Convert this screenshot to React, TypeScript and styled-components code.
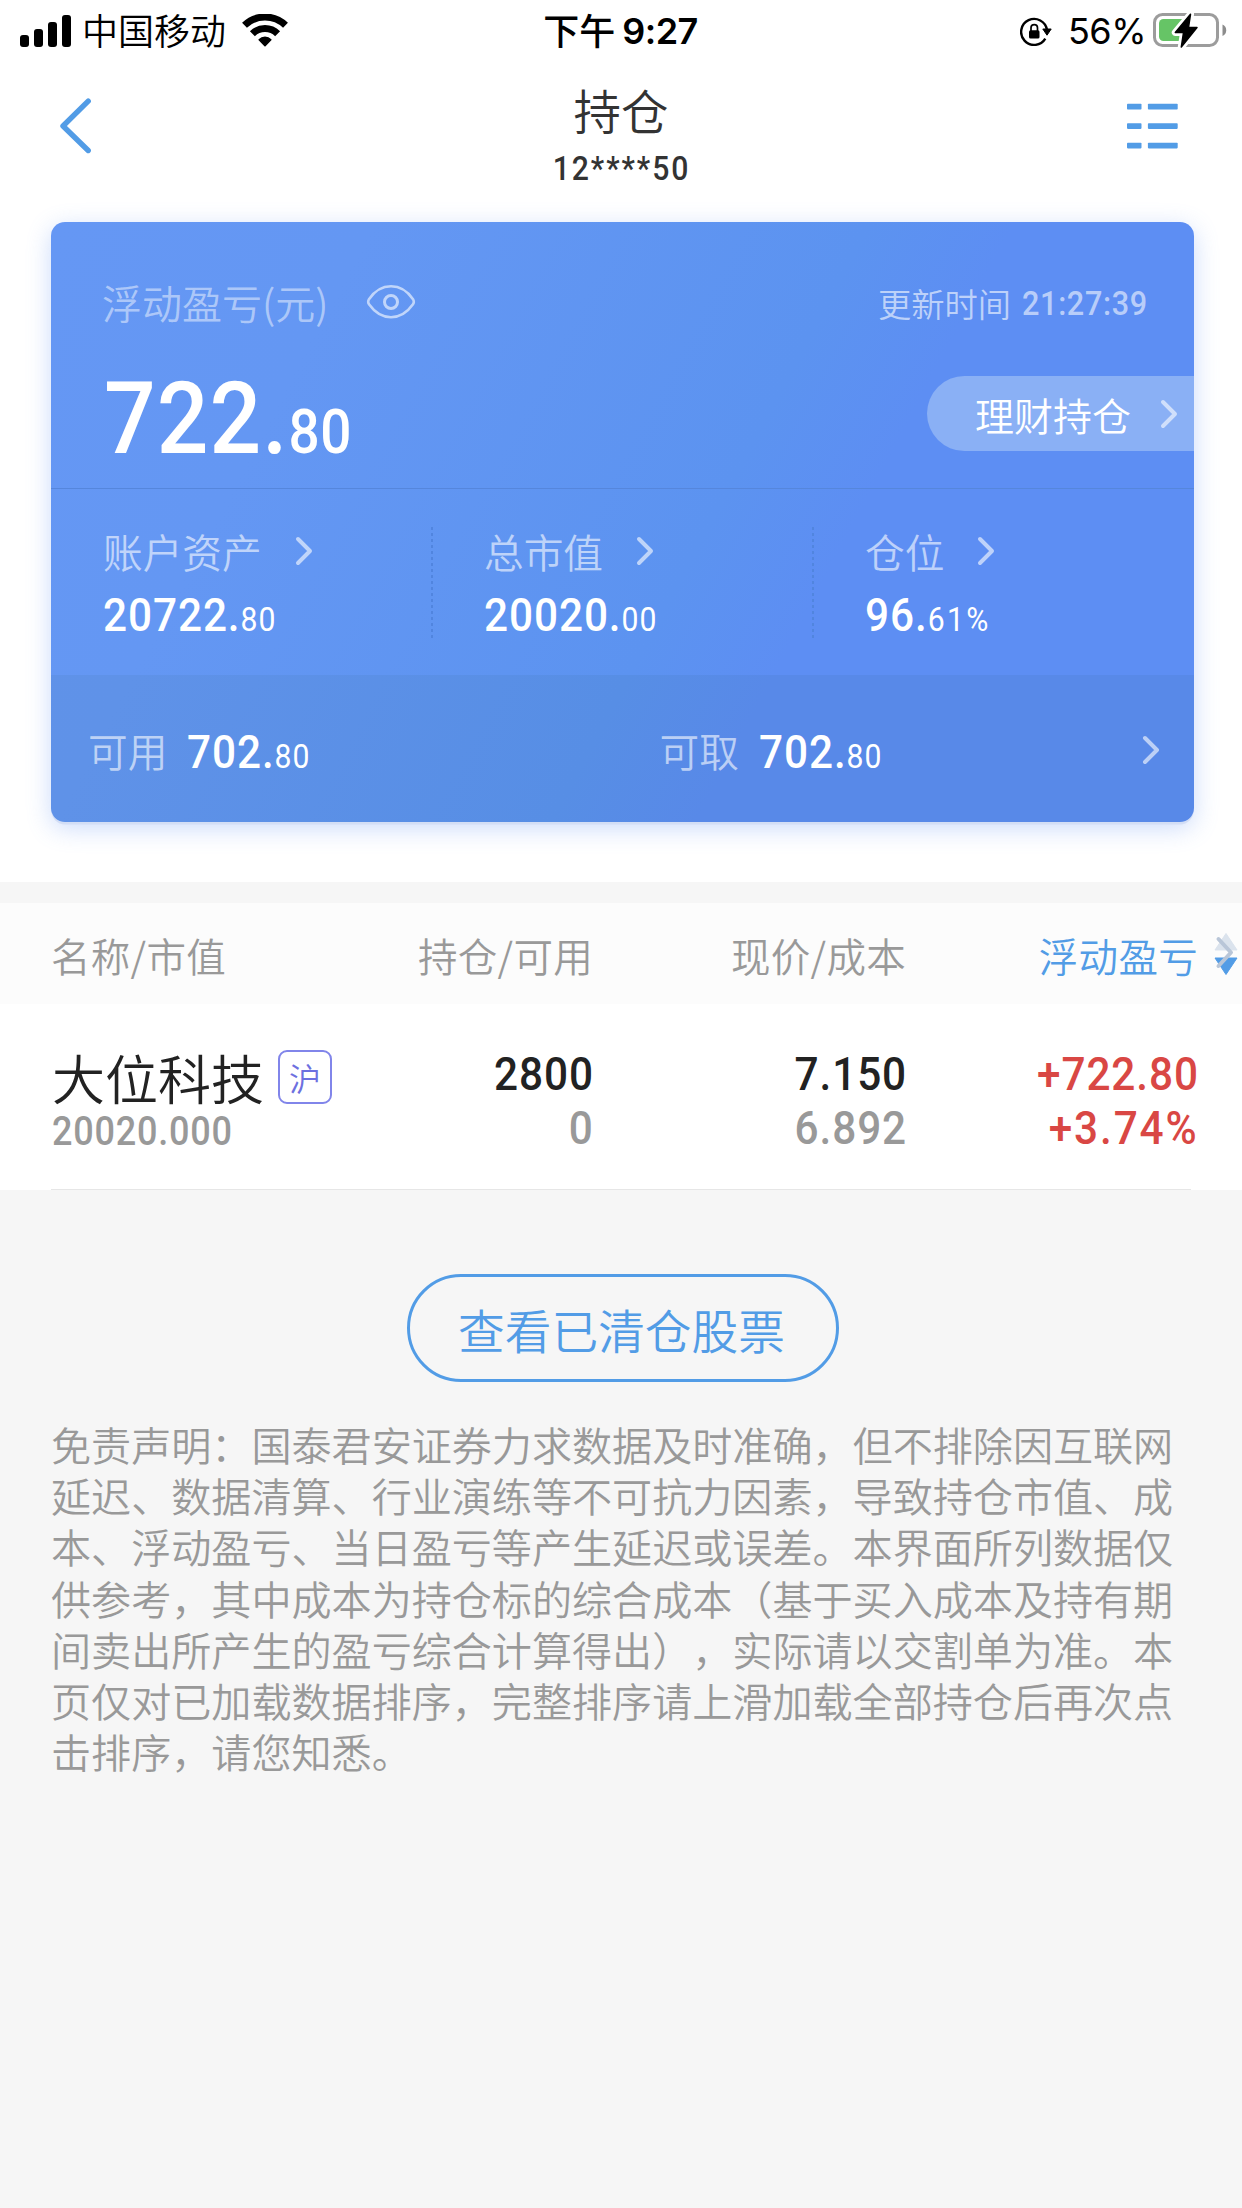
import React from 'react';
import styled, { createGlobalStyle } from 'styled-components';

const blue = '#529ce6';
const cjk = `'Noto Sans CJK SC', sans-serif`;

const GlobalStyle = createGlobalStyle`
  * { box-sizing: border-box; }
  html, body { margin: 0; padding: 0; background: #f6f6f6; }
  body {
    font-family: 'Noto Sans CJK SC DemiLight', ${cjk};
    font-weight: 350;
    text-spacing-trim: space-all;
    overflow: hidden;
  }
`;

const Screen = styled.div`
  width: 1242px;
  height: 2208px;
  overflow: hidden;
  display: flex;
  flex-direction: column;
  background: #f6f6f6;
`;

const Top = styled.div`
  background: #fff;
  height: 882px;
  flex: none;
`;

/* ---------- status bar ---------- */

const StatusBar = styled.div`
  height: 62px;
  display: grid;
  grid-template-columns: 1fr auto 1fr;
  align-items: center;
  padding: 0 15px 0 20px;
  color: #000;
`;

const StatusGroup = styled.div<{ $end?: boolean; $gap?: number }>`
  display: flex;
  align-items: center;
  gap: ${(p) => p.$gap ?? 0}px;
  justify-content: ${(p) => (p.$end ? 'flex-end' : 'flex-start')};
`;

const Clock = styled(StatusGroup)`
  padding-right: 6px;
`;

const Carrier = styled.span`
  font-size: 36px;
  line-height: 40px;
  padding: 0 4px 4px 0;
  margin-left: -2px;
  white-space: nowrap;
`;

const DayPart = styled.span`
  font-family: ${cjk};
  font-weight: 500;
  font-size: 36px;
  line-height: 40px;
  padding-bottom: 4px;
`;

const StatusDigits = styled.span<{ $weight?: number; $spacing?: number }>`
  font-family: Inter, sans-serif;
  font-size: 36px;
  line-height: 40px;
  font-weight: ${(p) => p.$weight ?? 400};
  letter-spacing: ${(p) => p.$spacing ?? 0}px;
`;

/* ---------- navigation ---------- */

const NavBar = styled.div`
  height: 160px;
  display: grid;
  grid-template-columns: 1fr auto 1fr;
  align-items: center;
  padding: 0 63px 32px 60px;
  color: #333;
`;

const NavSide = styled.div<{ $end?: boolean }>`
  display: flex;
  justify-content: ${(p) => (p.$end ? 'flex-end' : 'flex-start')};
`;

const NavTitle = styled.div`
  align-self: start;
  display: flex;
  flex-direction: column;
  align-items: center;
  padding: 18px 0 0 3px;
`;

const Title = styled.h1`
  margin: 0 0 12px;
  font-size: 47.5px;
  line-height: 60px;
  font-weight: inherit;
`;

/* Narrow DIN-like figures: Roboto condensed horizontally */
const Num = styled.span<{
  $size: number;
  $color?: string;
  $weight?: number;
  $origin?: string;
  $spacing?: number;
}>`
  display: inline-block;
  font-family: Roboto, sans-serif;
  font-weight: ${(p) => p.$weight ?? 500};
  font-size: ${(p) => p.$size}px;
  line-height: 1;
  letter-spacing: ${(p) => p.$spacing ?? 0.022}em;
  color: ${(p) => p.$color ?? 'inherit'};
  transform: scaleX(0.9);
  transform-origin: ${(p) => p.$origin ?? 'left'} center;
  white-space: nowrap;
`;

const Cents = styled.span<{ $size: number; $weight?: number; $spacing?: number }>`
  font-size: ${(p) => p.$size}px;
  font-weight: ${(p) => p.$weight ?? 400};
  letter-spacing: ${(p) => p.$spacing ?? 0.03}em;
  line-height: 0;
`;

/* ---------- summary card ---------- */

const Card = styled.section`
  margin: 0 48px 0 51px;
  height: 600px;
  border-radius: 14px;
  overflow: hidden;
  display: flex;
  flex-direction: column;
  color: #fff;
  background: linear-gradient(118deg, #6597f4 0%, #6497f3 22%, #5c93f0 56%, #5d8ef3 66%, #5d8ef3 100%);
  box-shadow: 0 3px 0 -0.5px #d3def5, 0 6px 24px rgba(93, 142, 243, 0.32);
`;

const Headline = styled.div`
  height: 267px;
  border-bottom: 1px solid #5586dc;
  display: flex;
  justify-content: space-between;
`;

const HeadColumn = styled.div<{ $end?: boolean }>`
  display: flex;
  flex-direction: column;
  align-items: ${(p) => (p.$end ? 'flex-end' : 'flex-start')};
  padding: ${(p) => (p.$end ? '54px 0 0' : '53px 0 0 51px')};
`;

const LabelLine = styled.div`
  display: flex;
  align-items: center;
`;

const Label = styled.span<{ $size?: number; $alpha?: number }>`
  font-size: ${(p) => p.$size ?? 39.7}px;
  line-height: 54px;
  color: rgba(255, 255, 255, ${(p) => p.$alpha ?? 0.6});
  white-space: nowrap;
`;

const EyeSlot = styled.span`
  display: flex;
  margin-left: 38px;
`;

const MainFigure = styled.div`
  margin-top: 39px;
  padding-left: 2px;
  line-height: 1;
  display: flex;
`;

const UpdateLine = styled.div`
  display: flex;
  align-items: center;
  gap: 11px;
  padding-right: 32px;
`;

const Pill = styled.div`
  margin-top: 46px;
  width: 267px;
  height: 75px;
  border-radius: 38px 0 0 38px;
  background: #8ab0f5;
  display: flex;
  align-items: center;
  justify-content: space-between;
  padding: 0 16px 0 48px;
`;

const PillText = styled.span`
  font-size: 39px;
  line-height: 54px;
  color: #fff;
`;

const Stats = styled.div`
  height: 186px;
  display: grid;
  grid-template-columns: repeat(3, 1fr);
`;

const Stat = styled.div`
  padding: 35px 0 0 52px;
  display: flex;
  flex-direction: column;
  align-items: flex-start;
  position: relative;

  & + &::before {
    content: '';
    position: absolute;
    left: -1px;
    top: 38px;
    width: 2px;
    height: 112px;
    background: repeating-linear-gradient(#5185df 0 3px, transparent 3px 6px);
  }
`;

const StatHead = styled.div`
  display: flex;
  align-items: center;
  gap: 33px;
  margin-bottom: 13px;
`;

const Funds = styled.div`
  flex: 1;
  display: grid;
  grid-template-columns: 1fr 1fr;
  background: rgba(20, 60, 60, 0.06);
`;

const Fund = styled.div`
  display: flex;
  align-items: center;
  padding: 2px 34px 0 37px;
  gap: 20px;
`;

const FundValue = styled.span`
  display: flex;
  padding-top: 3px;
`;

const Push = styled.span`
  margin-left: auto;
  display: flex;
`;

/* ---------- holdings table ---------- */

const gridCols = '51px 254px 288px 313px 292px 44px';

const TableHead = styled.div`
  margin-top: 21px;
  height: 101px;
  flex: none;
  background: #fcfcfc;
  display: grid;
  grid-template-columns: ${gridCols};
  align-items: center;
  font-size: 39.5px;
  letter-spacing: 0.3px;
  line-height: 54px;
  color: #999;
`;

const HeadCell = styled.span<{ $active?: boolean; $first?: boolean }>`
  text-align: ${(p) => (p.$first ? 'left' : 'right')};
  white-space: nowrap;
  grid-column: ${(p) => (p.$first ? '2' : 'auto')};
  color: ${(p) => (p.$active ? blue : 'inherit')};
  padding-top: 2px;
`;

const SortMark = styled.span`
  display: flex;
  justify-content: flex-end;
  padding: 0 3px 0 0;
`;

const Row = styled.div`
  height: 186px;
  flex: none;
  background: #fff;
  display: grid;
  grid-template-columns: ${gridCols};
  position: relative;

  &::after {
    content: '';
    position: absolute;
    left: 51px;
    right: 51px;
    bottom: 0;
    height: 1px;
    background: #e6e6e6;
  }
`;

const NameCell = styled.div`
  grid-column: 2;
  padding: 41px 0 0 1px;
`;

const NameLine = styled.div`
  display: flex;
  align-items: center;
  height: 64px;
  margin-bottom: 3px;
`;

const StockName = styled.span`
  font-size: 53px;
  line-height: 60px;
  color: #222;
  white-space: nowrap;
  padding-bottom: 1px;
`;

const Tag = styled.span`
  flex: none;
  width: 54px;
  height: 54px;
  margin-left: 14px;
  border: 2px solid #8185ea;
  border-radius: 9px;
  display: flex;
  justify-content: center;
  font-size: 32px;
  line-height: 50px;
  color: #6d70e0;
`;

const ValueCell = styled.div`
  display: flex;
  flex-direction: column;
  align-items: flex-end;
  padding-top: 46px;
  margin-right: -1px;
  gap: 7px;
`;

/* ---------- footer ---------- */

const ClearedButton = styled.button`
  flex: none;
  align-self: center;
  margin: 84px 0 0 4px;
  width: 432px;
  height: 108px;
  padding: 1px 3px 0 0;
  border: 3px solid ${blue};
  border-radius: 54px;
  background: transparent;
  color: ${blue};
  font-family: inherit;
  font-weight: inherit;
  font-size: 46.7px;
  line-height: 60px;
  white-space: nowrap;
`;

const Disclaimer = styled.p`
  margin: 36px 0 0 51px;
  font-size: 40.1px;
  line-height: 51.2px;
  color: #999;
  white-space: pre;
`;

/* ---------- icons ---------- */

const Chevron = ({ color = 'rgba(255,255,255,0.6)' }: { color?: string }) => (
  <svg width="18" height="30" viewBox="0 0 18 30" fill="none" stroke={color} strokeWidth="4" strokeLinecap="round" strokeLinejoin="round">
    <path d="M3 3L15 15L3 27" />
  </svg>
);

const SignalIcon = () => (
  <svg width="52" height="34" viewBox="0 0 52 34">
    <rect x="0" y="21" width="9" height="12" rx="3" />
    <rect x="14" y="15" width="9" height="18" rx="3" />
    <rect x="28" y="8" width="9" height="25" rx="3" />
    <rect x="42" y="1" width="9" height="32" rx="3" />
  </svg>
);

const WifiIcon = () => (
  <svg width="46" height="34" viewBox="0 0 46 34" fill="none" stroke="#000" strokeWidth="7">
    <path d="M2.500 11.300A29.500 29.500 0 0 1 43.500 11.300" />
    <path d="M10.400 19.700A17.800 17.800 0 0 1 35.600 19.700" />
    <path d="M23 31.700L17.200 25.700A8.200 8.200 0 0 1 28.800 25.700Z" fill="#000" strokeWidth="1.600" strokeLinejoin="round" />
  </svg>
);

const LockIcon = () => (
  <svg width="32" height="30" viewBox="0 0 32 30" fill="none" stroke="#000">
    <path d="M25.300 22.600A13 13 0 1 1 27 14" strokeWidth="2.400" />
    <path d="M22.800 13h8.400l-4.200 6.200z" fill="#000" strokeWidth="1" strokeLinejoin="round" />
    <rect x="9" y="14.200" width="10.500" height="8.300" rx="1.600" fill="#000" stroke="none" />
    <path d="M11 15v-3.200a3.250 3.250 0 0 1 6.500 0V15" strokeWidth="1.700" />
  </svg>
);

const BatteryIcon = () => (
  <svg width="74" height="36" viewBox="0 0 74 36">
    <rect x="1.500" y="1.500" width="63" height="31" rx="8" fill="none" stroke="#9c9c9c" strokeWidth="3" />
    <path d="M69.500 11.500c2.500 1 3.700 3 3.700 5.700s-1.200 4.700-3.700 5.700z" fill="#8c8c8c" />
    <rect x="6" y="6" width="29" height="22" rx="4.500" fill="#66c466" />
    <path d="M37.500 1.300L22.300 19.500H30.500L28.300 34L44 14.500H35.500Z" fill="#fff" stroke="#fff" strokeWidth="7" strokeLinejoin="round" />
    <path d="M37.500 1.300L22.300 19.500H30.500L28.300 34L44 14.500H35.500Z" fill="#000" stroke="#000" strokeWidth="1.500" strokeLinejoin="round" />
  </svg>
);

const BackIcon = () => (
  <svg width="32" height="56" viewBox="0 0 32 56" fill="none" stroke={blue} strokeWidth="5.400" strokeLinecap="round" strokeLinejoin="round">
    <path d="M28.200 3.200L3 28L28.200 52.500" />
  </svg>
);

const MenuIcon = () => (
  <svg width="52" height="46" viewBox="0 0 52 46" fill={blue}>
    {[0.8, 20.2, 39.7].map((y) => (
      <React.Fragment key={y}>
        <rect x="0" y={y} width="14.500" height="5.700" rx="0.800" />
        <rect x="20.900" y={y} width="29.800" height="5.700" rx="0.800" />
      </React.Fragment>
    ))}
  </svg>
);

const EyeIcon = () => (
  <svg width="50" height="36" viewBox="0 0 50 36" fill="none" stroke="rgba(255,255,255,0.6)" strokeWidth="2.600">
    <path d="M3 15.200C9 6.500 16.500 2.300 25 2.300S41 6.500 47 15.200Q48.600 18 47 20.300C41 28.800 33.500 33.200 25 33.200S9 28.800 3 20.300Q1.400 18 3 15.200Z" />
    <circle cx="25" cy="18" r="6.500" strokeWidth="3" />
  </svg>
);

const SortIcon = () => (
  <svg width="26" height="44" viewBox="0 0 26 44">
    <path d="M13 1.500L24 18H2Z" fill="#dbe3ed" stroke="#dbe3ed" strokeLinejoin="round" />
    <path d="M2 26H24L13 42.500Z" fill={blue} stroke={blue} strokeLinejoin="round" />
    <path d="M5.500 7L18 20.500L5.500 34" fill="none" stroke="#b9c6d8" strokeWidth="4" strokeLinecap="round" strokeLinejoin="round" />
  </svg>
);

/* ---------- data ---------- */

const stats = [
  { label: '账户资产', whole: '20722.', part: '80' },
  { label: '总市值', whole: '20020.', part: '00' },
  { label: '仓位', whole: '96.', part: '61%', spacing: 0.08 },
];

const disclaimer = [
  '免责声明：国泰君安证券力求数据及时准确，但不排除因互联网',
  '延迟、数据清算、行业演练等不可抗力因素，导致持仓市值、成',
  '本、浮动盈亏、当日盈亏等产生延迟或误差。本界面所列数据仅',
  '供参考，其中成本为持仓标的综合成本（基于买入成本及持有期',
  '间卖出所产生的盈亏综合计算得出），实际请以交割单为准。本',
  '页仅对已加载数据排序，完整排序请上滑加载全部持仓后再次点',
  '击排序，请您知悉。',
].join('\n');

const values = [
  { top: '2800', bottom: '0', c1: '#222', c2: '#999' },
  { top: '7.150', bottom: '6.892', c1: '#222', c2: '#999' },
  { top: '+722.80', bottom: '+3.74%', c1: '#d94744', c2: '#d94744', spacing: 0.045 },
];

export default function App() {
  return (
    <Screen>
      <GlobalStyle />
      <Top>
        <StatusBar>
          <StatusGroup $gap={12}>
            <SignalIcon />
            <Carrier>中国移动</Carrier>
            <WifiIcon />
          </StatusGroup>
          <Clock $gap={7}>
            <DayPart>下午</DayPart>
            <StatusDigits $weight={600} $spacing={-0.5}>9:27</StatusDigits>
          </Clock>
          <StatusGroup $end $gap={7}>
            <StatusGroup $gap={16}>
              <LockIcon />
              <StatusDigits $spacing={-0.5}>56%</StatusDigits>
            </StatusGroup>
            <BatteryIcon />
          </StatusGroup>
        </StatusBar>

        <NavBar>
          <NavSide><BackIcon /></NavSide>
          <NavTitle>
            <Title>持仓</Title>
            <Num $size={33.5} $origin="center" $spacing={0.065}>12****50</Num>
          </NavTitle>
          <NavSide $end><MenuIcon /></NavSide>
        </NavBar>

        <Card>
          <Headline>
            <HeadColumn>
              <LabelLine>
                <Label $size={40} $alpha={0.48}>浮动盈亏(元)</Label>
                <EyeSlot><EyeIcon /></EyeSlot>
              </LabelLine>
              <MainFigure>
                <Num $size={101} $spacing={0.012}>722.<Cents $size={61} $weight={500} $spacing={0.01}>80</Cents></Num>
              </MainFigure>
            </HeadColumn>
            <HeadColumn $end>
              <UpdateLine>
                <Label $size={33.3}>更新时间</Label>
                <Num $size={34} $weight={500} $color="rgba(255,255,255,0.58)">21:27:39</Num>
              </UpdateLine>
              <Pill>
                <PillText>理财持仓</PillText>
                <Chevron />
              </Pill>
            </HeadColumn>
          </Headline>
          <Stats>
            {stats.map((s) => (
              <Stat key={s.label}>
                <StatHead>
                  <Label>{s.label}</Label>
                  <Chevron />
                </StatHead>
                <Num $size={47}>{s.whole}<Cents $size={33.5} $spacing={s.spacing}>{s.part}</Cents></Num>
              </Stat>
            ))}
          </Stats>
          <Funds>
            <Fund>
              <Label>可用</Label>
              <FundValue><Num $size={47}>702.<Cents $size={33.5}>80</Cents></Num></FundValue>
            </Fund>
            <Fund>
              <Label>可取</Label>
              <FundValue><Num $size={47}>702.<Cents $size={33.5}>80</Cents></Num></FundValue>
              <Push><Chevron /></Push>
            </Fund>
          </Funds>
        </Card>
      </Top>

      <TableHead>
        <HeadCell $first>名称/市值</HeadCell>
        <HeadCell>持仓/可用</HeadCell>
        <HeadCell>现价/成本</HeadCell>
        <HeadCell $active>浮动盈亏</HeadCell>
        <SortMark><SortIcon /></SortMark>
      </TableHead>
      <Row>
        <NameCell>
          <NameLine>
            <StockName>大位科技</StockName>
            <Tag>沪</Tag>
          </NameLine>
          <Num $size={40} $color="#999">20020.000</Num>
        </NameCell>
        {values.map((v) => (
          <ValueCell key={v.top}>
            <Num $size={47} $color={v.c1} $origin="right">{v.top}</Num>
            <Num $size={47} $color={v.c2} $origin="right" $spacing={v.spacing}>{v.bottom}</Num>
          </ValueCell>
        ))}
      </Row>

      <ClearedButton>查看已清仓股票</ClearedButton>
      <Disclaimer>{disclaimer}</Disclaimer>
    </Screen>
  );
}
